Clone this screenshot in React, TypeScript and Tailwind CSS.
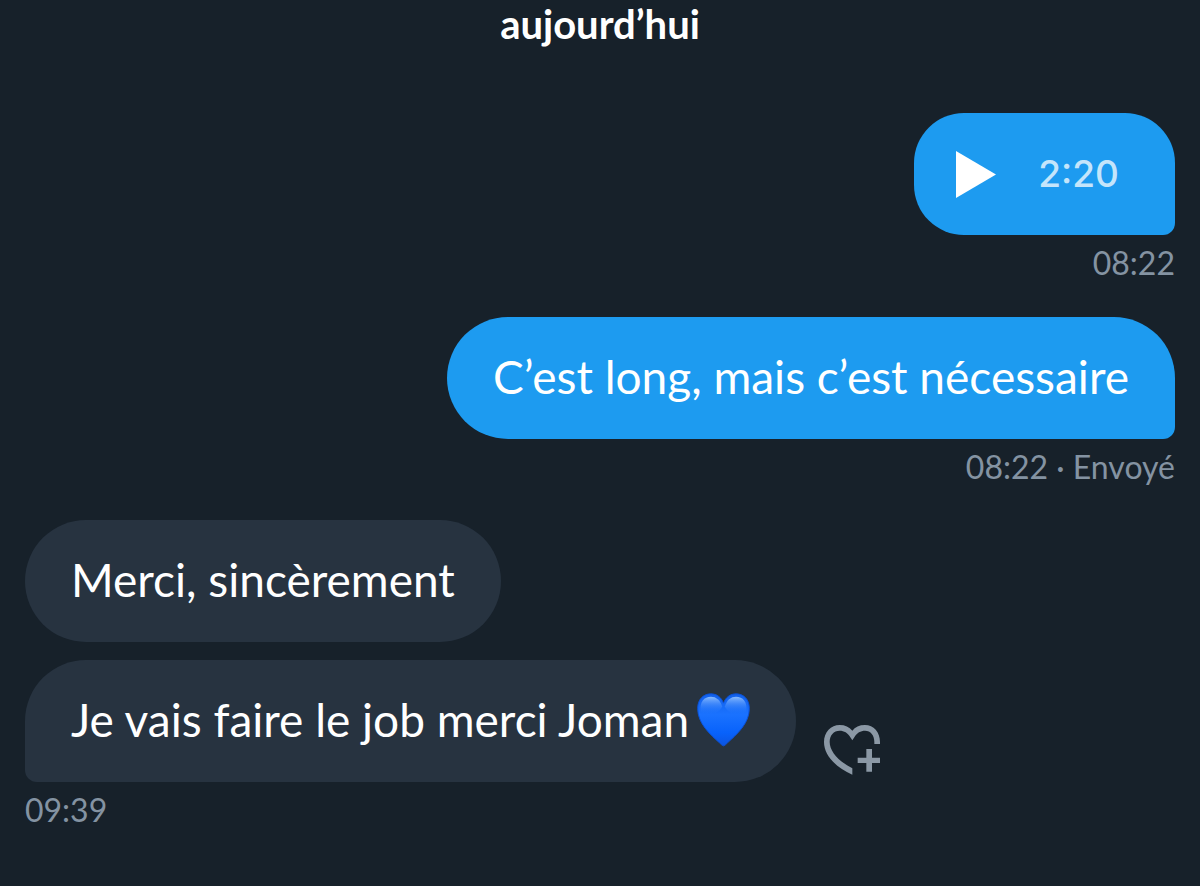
import React from "react";

type Message = {
  text: string;
  heart?: boolean;
};

const received: Message[] = [
  { text: "Merci, sincèrement" },
  { text: "Je vais faire le job merci Joman", heart: true },
];

function BlueHeart() {
  return (
    <svg
      role="img"
      aria-label="cœur bleu"
      viewBox="0 0 160 162"
      className="h-[54px] w-[53px] shrink-0"
    >
      <defs>
        <linearGradient id="heart-fill" x1="0" y1="0" x2="0" y2="1">
          <stop offset="0" stopColor="#1260ea" />
          <stop offset="0.4" stopColor="#1a72ff" />
          <stop offset="0.75" stopColor="#0862fb" />
          <stop offset="1" stopColor="#0c54e0" />
        </linearGradient>
        <linearGradient id="heart-shine" x1="0" y1="0" x2="0" y2="1">
          <stop offset="0" stopColor="#8fc0ff" stopOpacity="0.95" />
          <stop offset="0.45" stopColor="#5a9cff" stopOpacity="0.5" />
          <stop offset="1" stopColor="#1a74ff" stopOpacity="0" />
        </linearGradient>
      </defs>
      <path
        d="M80 159C77 159 73 155 68 150C40 124 2 92 2 46C2 19 19 2 42 2C59 2 73 12 80 30C87 12 101 2 118 2C141 2 158 19 158 46C158 92 120 124 92 150C87 155 83 159 80 159Z"
        fill="url(#heart-fill)"
        stroke="#0a52d8"
        strokeWidth="3"
      />
      <path
        d="M11 56C7 26 22 11 42 11C58 11 70 21 76 40C68 62 28 74 11 56Z"
        fill="url(#heart-shine)"
      />
      <path
        d="M149 56C153 26 138 11 118 11C102 11 90 21 84 40C92 62 132 74 149 56Z"
        fill="url(#heart-shine)"
      />
    </svg>
  );
}

function AddReaction() {
  return (
    <button type="button" aria-label="Ajouter une réaction" className="mb-[7px] shrink-0">
      <svg viewBox="0 0 174 153" className="h-[51px] w-[58px] fill-[#8b98a5]">
        <path d="M171 60V54C171 25 152 3 126 3C109 3 96 9 88 20C79 9 66 3 50 3C24 3 3 25 3 54C3 95 40 131 88 152V133C47 112 20 82 20 54C20 34 32 20 50 20C63 20 75 27 80 37L88 49L96 37C101 27 113 20 126 20C143 20 154 34 154 54V60Z" />
        <path d="M130 75H147V101H171V117H147V143H130V117H104V101H130Z" />
      </svg>
    </button>
  );
}

function App() {
  return (
    <main className="min-h-screen bg-[#17212a] px-[25px] font-[Lato,sans-serif] text-white">
      <h1 className="text-center text-[40px] leading-[48px] font-bold">aujourd’hui</h1>

      <section className="mt-[65px] flex flex-col items-end">
        <div className="flex items-center gap-[42px] rounded-[50px] rounded-br-xl bg-[#1d9bf0] py-[31px] pr-14 pl-[42px]">
          <button type="button" aria-label="Lire le message vocal">
            <svg viewBox="0 0 40 47" className="h-[47px] w-10 fill-white">
              <path d="M0 0L40 23.5L0 47Z" />
            </svg>
          </button>
          <span className="font-[Inter,sans-serif] text-[37px] leading-[60px] font-medium text-[#c4e5fb]">
            2:20
          </span>
        </div>
        <time className="text-[32px] leading-[56px] text-[#8493a2]">08:22</time>
      </section>

      <section className="mt-[26px] flex flex-col items-end">
        <p className="rounded-[61px] rounded-br-xl bg-[#1d9bf0] px-[46px] pt-[30px] pb-8 text-[46px] leading-[60px]">
          C’est long, mais c’est nécessaire
        </p>
        <p className="text-[32px] leading-[56px] text-[#8493a2]">
          <time>08:22</time> · Envoyé
        </p>
      </section>

      <section className="mt-[25px] flex flex-col items-start gap-[18px]">
        {received.map((message) =>
          message.heart ? (
            <div key={message.text} className="flex items-end gap-[27px]">
              <p className="flex items-center gap-2 rounded-[61px] rounded-bl-xl bg-[#273340] px-[46px] pt-[30px] pb-8 text-[46px] leading-[60px]">
                {message.text}
                <BlueHeart />
              </p>
              <AddReaction />
            </div>
          ) : (
            <p
              key={message.text}
              className="rounded-[61px] bg-[#273340] px-[46px] pt-[30px] pb-8 text-[46px] leading-[60px]"
            >
              {message.text}
            </p>
          )
        )}
      </section>
      <time className="block text-[32px] leading-[56px] text-[#8493a2]">09:39</time>
    </main>
  );
}

export default App;
